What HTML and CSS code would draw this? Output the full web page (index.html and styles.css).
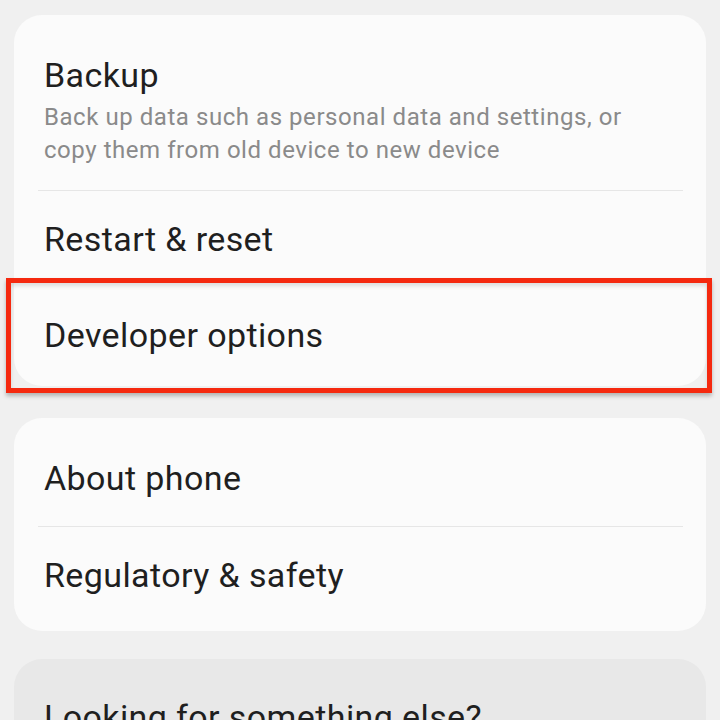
FILE: index.html
```html
<!DOCTYPE html>
<html lang="en">

<head>
    <meta charset="UTF-8">
    <meta name="viewport" content="width=device-width, initial-scale=1.0">
    <title>Settings</title>
    <link rel="stylesheet" href="styles.css">
</head>

<body>
    <div class="card card-top">
        <div class="item item-desc">
            <div class="item-title">Backup</div>
            <div class="item-sub">Back up data such as personal data and settings, or copy them from old device to new device</div>
        </div>
        <div class="divider"></div>
        <div class="item">
            <div class="item-title">Restart &amp; reset</div>
        </div>
        <div class="item highlighted">
            <div class="item-title">Developer options</div>
            <span class="mark"></span>
        </div>
    </div>

    <div class="card card-about">
        <div class="item">
            <div class="item-title">About phone</div>
        </div>
        <div class="divider"></div>
        <div class="item">
            <div class="item-title">Regulatory &amp; safety</div>
        </div>
    </div>

    <div class="card card-help">
        <div class="item-title">Looking for something else?</div>
    </div>
</body>

</html>
```

FILE: styles.css
```css
/* Settings list */
body {
    font-family: Roboto, "Noto Sans", sans-serif;
    background-color: #f0f0f0;
    margin: 0;
    padding: 15px 14px 0;
    height: 720px;
    overflow: hidden;
    box-sizing: border-box;
}

.card {
    background-color: #fbfbfb;
    border-radius: 28px;
}

.card-top {
    padding: 10px 0 3px;
}

.card-about {
    margin-top: 32px;
    padding: 12px 0 8px;
}

.card-help {
    margin-top: 28px;
    padding: 38px 30px;
    background-color: #e8e8e8;
}

.item {
    padding: 28px 30px;
}

.item-desc {
    padding: 30px 30px 23px;
}

.item-title {
    font-size: 34px;
    line-height: 40px;
    letter-spacing: 0.4px;
    color: #1f1f1f;
}

.item-sub {
    margin-top: 6px;
    padding-right: 20px;
    font-size: 24px;
    line-height: 33px;
    letter-spacing: 0.55px;
    color: #8a8a8a;
}

.divider {
    height: 1px;
    margin: 0 23px 0 24px;
    background-color: #e6e6e6;
}

.highlighted {
    position: relative;
}

/* red outline drawn over the row */
.mark {
    position: absolute;
    top: -9px;
    bottom: -10px;
    left: -8px;
    right: -6px;
    border: 5px solid #f5290f;
    box-shadow: 0 3px 4px rgba(0, 0, 0, 0.25), inset 0 3px 4px rgba(0, 0, 0, 0.12);
}
```
